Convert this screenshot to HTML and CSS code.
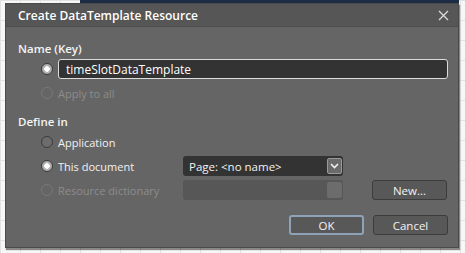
FILE: index.html
```html
<!DOCTYPE html>
<html lang="en">
<head>
    <meta charset="UTF-8">
    <title>Create DataTemplate Resource</title>
    <link rel="stylesheet" href="styles.css">
</head>
<body>
    <div class="backdrop">
        <div class="strip"></div>
        <div class="dialog">
            <header class="titlebar">
                <h1>Create DataTemplate Resource</h1>
                <span class="close">
                    <svg width="11" height="11" viewBox="0 0 11 11">
                        <path d="M1 1 L10 10 M10 1 L1 10" stroke="#d8d8d8" stroke-width="1.4" fill="none"/>
                    </svg>
                </span>
            </header>
            <div class="content">
                <section class="group">
                    <h2>Name (Key)</h2>
                    <div class="row">
                        <span class="radio checked"></span>
                        <input class="key-input" type="text" value="timeSlotDataTemplate">
                    </div>
                    <div class="row disabled">
                        <span class="radio"></span>
                        <span>Apply to all</span>
                    </div>
                </section>
                <section class="group define">
                    <h2>Define in</h2>
                    <div class="define-grid">
                        <div class="row">
                            <span class="radio"></span>
                            <span>Application</span>
                        </div>
                        <div></div><div></div><div></div>

                        <div class="row">
                            <span class="radio checked"></span>
                            <span>This document</span>
                        </div>
                        <div class="combo">
                            <span>Page: &lt;no name&gt;</span>
                            <span class="combo-btn">
                                <svg width="9" height="6" viewBox="0 0 9 6">
                                    <path d="M1 1 L4.5 4.5 L8 1" stroke="#f0f0f0" stroke-width="1.6" fill="none"/>
                                </svg>
                            </span>
                        </div>
                        <div></div><div></div>

                        <div class="row disabled">
                            <span class="radio"></span>
                            <span>Resource dictionary</span>
                        </div>
                        <div class="combo off">
                            <span></span>
                            <span class="combo-btn"></span>
                        </div>
                        <div></div>
                        <button class="btn">New...</button>
                    </div>
                </section>
                <footer class="actions">
                    <button class="btn default">OK</button>
                    <button class="btn">Cancel</button>
                </footer>
            </div>
        </div>
    </div>
</body>
</html>
```

FILE: styles.css
```css
* {
    margin: 0;
    padding: 0;
    box-sizing: border-box;
}

body {
    background-color: #f7f7f7;
    background-image:
        linear-gradient(#e2e2e2 1px, transparent 1px),
        linear-gradient(90deg, #e2e2e2 1px, transparent 1px);
    background-size: 20px 20px;
    font-family: 'Open Sans', 'Noto Sans', sans-serif;
    font-size: 11px;
    color: #f2f2f2;
    width: 465px;
    height: 253px;
    overflow: hidden;
}

.backdrop {
    position: relative;
    height: 253px;
    padding: 3px 0 0 5px;
}

.strip {
    position: absolute;
    top: 0;
    left: 80px;
    right: 6px;
    height: 3px;
    background: #1c2c44;
}

.dialog {
    position: relative;
    width: 454px;
    height: 245px;
    background: #656565;
    border: 1px solid #4a4a4a;
    box-shadow: 1px 2px 1px rgba(0, 0, 0, 0.45);
    display: flex;
    flex-direction: column;
}

.titlebar {
    height: 23px;
    background: #565656;
    border-bottom: 1px solid #4e4e4e;
    display: flex;
    align-items: center;
    justify-content: space-between;
    padding: 0 9px 0 12px;
}

.titlebar h1 {
    font-size: 12px;
    font-weight: 600;
    color: #ffffff;
}

.close {
    display: flex;
}

.content {
    flex: 1;
    padding: 14px 10px 0 12px;
    display: flex;
    flex-direction: column;
}

.group h2 {
    font-size: 11.5px;
    line-height: 16px;
    font-weight: 600;
    color: #f4f4f4;
}

.row {
    display: flex;
    align-items: center;
    gap: 5px;
    height: 24px;
    padding-left: 23px;
}

.disabled {
    color: #8c8c8c;
}

.radio {
    width: 12px;
    height: 12px;
    border-radius: 50%;
    border: 1.5px solid #3c3c3c;
    background: #6c6c6c;
    flex-shrink: 0;
}

.radio.checked {
    border: 1.5px solid #3a3a3a;
    background: radial-gradient(circle, #ffffff 0 2.5px, #b0b0b0 3px 100%);
}

.disabled .radio {
    border-color: #787878;
    background: transparent;
}

.key-input {
    width: 390px;
    height: 20px;
    background: #333333;
    border: 1px solid #dcdcdc;
    border-radius: 3px;
    color: #ffffff;
    font-family: inherit;
    font-size: 12px;
    padding: 0 7px;
    outline: none;
}

.define {
    margin-top: 9px;
}

.define-grid {
    display: grid;
    grid-template-columns: 165px 160px 29px 75px;
    grid-auto-rows: 24px;
    align-items: center;
}

.combo {
    height: 20px;
    background: #333333;
    border-radius: 3px;
    display: flex;
    align-items: center;
    justify-content: space-between;
    padding: 0 1px 0 6px;
    font-size: 11.5px;
}

.combo-btn {
    width: 15px;
    height: 16px;
    background: #6a6a6a;
    border: 1px solid #9a9a9a;
    border-radius: 2px;
    display: flex;
    align-items: center;
    justify-content: center;
}

.combo.off {
    background: #575757;
}

.combo.off .combo-btn {
    background: #6c6c6c;
    border-color: #6c6c6c;
}

.btn {
    height: 20px;
    background: #585858;
    border: 1px solid #3c3c3c;
    border-radius: 3px;
    color: #f2f2f2;
    font-family: inherit;
    font-size: 11.5px;
}

.actions {
    margin-top: auto;
    margin-bottom: 12px;
    display: flex;
    justify-content: flex-end;
    gap: 9px;
}

.actions .btn {
    width: 75px;
}

.btn.default {
    border: 2px solid #8ea2b8;
}
```
